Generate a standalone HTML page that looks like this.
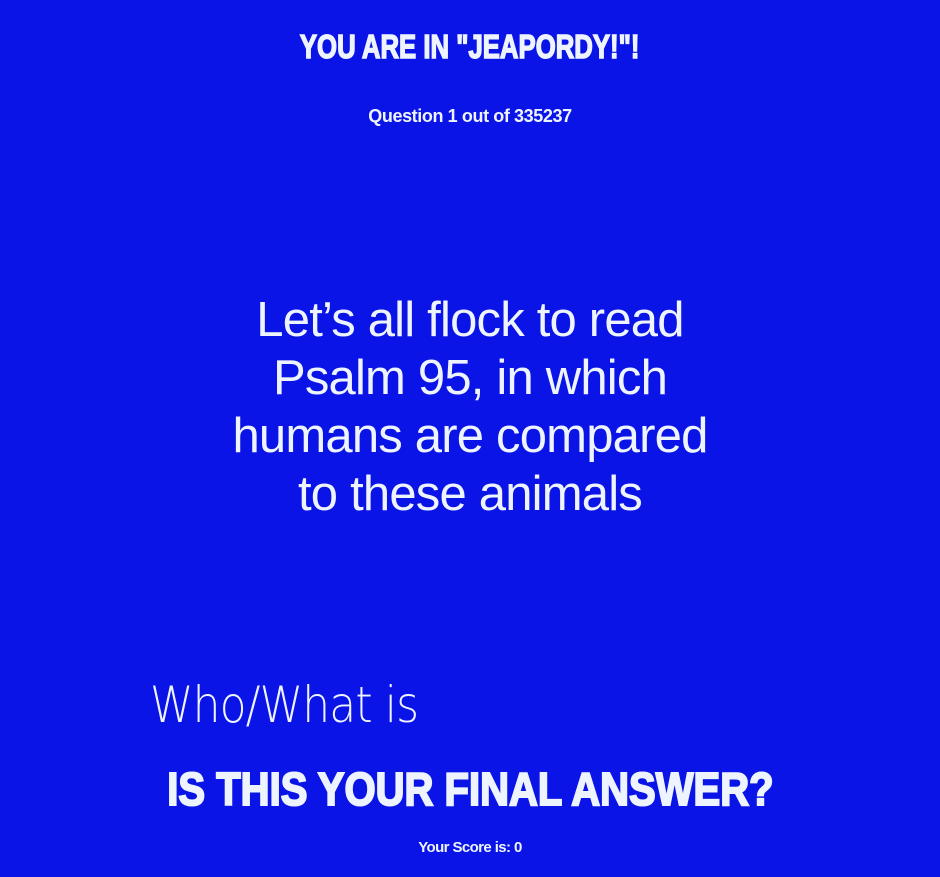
<!DOCTYPE html>
<html><head><style>
html,body{margin:0;padding:0;}
body{width:940px;height:877px;background:#0a14e6;color:#eef4ff;font-family:"Liberation Sans",sans-serif;position:relative;overflow:hidden;}
.a{position:absolute;left:0;width:940px;text-align:center;white-space:nowrap;}
.t{top:28px;font-size:33px;font-weight:bold;}
.t span{display:inline-block;transform:scaleX(0.78);transform-origin:center;-webkit-text-stroke:1.5px #eef4ff;}
.f span{display:inline-block;transform:scaleX(0.87);transform-origin:center;-webkit-text-stroke:2px #eef4ff;}
.q{top:106px;font-size:18px;font-weight:bold;letter-spacing:-0.4px;}
.b{top:291px;font-size:49px;line-height:58px;letter-spacing:-0.8px;}
.w{position:absolute;left:150px;top:676px;font-size:50px;letter-spacing:-1px;transform:scaleX(0.88);transform-origin:left;font-family:"DejaVu Sans",sans-serif;font-weight:200;}
.f{top:762px;font-size:46px;font-weight:bold;}
.s{top:839px;font-size:15px;font-weight:bold;letter-spacing:-0.6px;}
</style></head><body>
<div class="a t"><span>YOU ARE IN "JEAPORDY!"!</span></div>
<div class="a q">Question 1 out of 335237</div>
<div class="a b">Let’s all flock to read<br>Psalm 95, in which<br>humans are compared<br>to these animals</div>
<div class="w">Who/What is</div>
<div class="a f"><span>IS THIS YOUR FINAL ANSWER?</span></div>
<div class="a s">Your Score is: 0</div>
</body></html>
